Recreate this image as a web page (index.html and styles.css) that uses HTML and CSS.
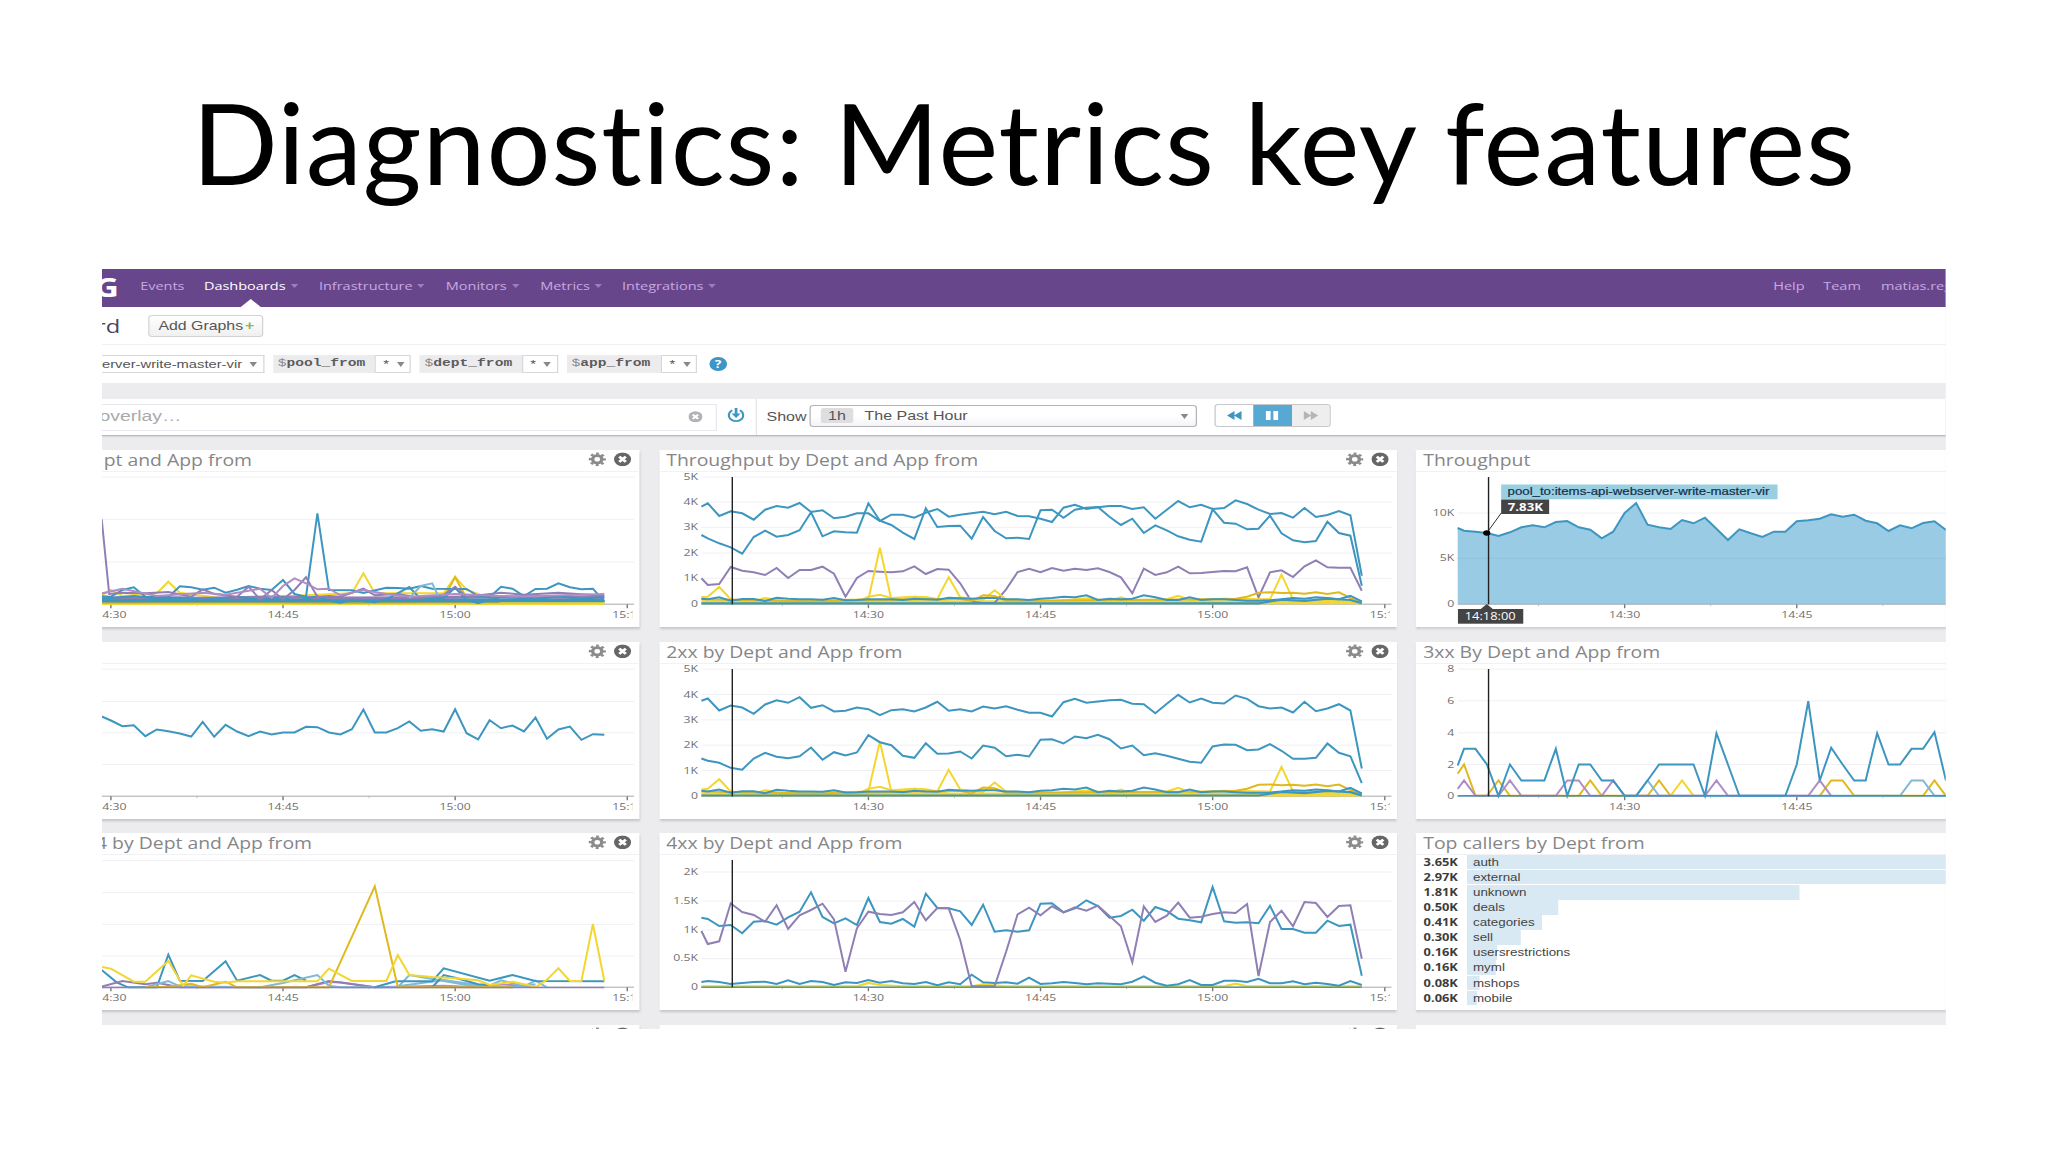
FILE: index.html
```html
<html>
  <head>
    <meta charset="utf-8">
    <title>Diagnostics: Metrics key features</title>
    <link rel="stylesheet" href="styles.css">
  </head>
  <body>
    <svg width="0" height="0" class="defs">
      <symbol id="gear" viewBox="0 0 16 16">
        <circle cx="8" cy="8" r="4.2" fill="none" stroke="#8b8b8b" stroke-width="3.2"/>
        <circle cx="8" cy="8" r="6.6" fill="none" stroke="#8b8b8b" stroke-width="2.6" stroke-dasharray="2.6 2.584" stroke-dashoffset="1.3"/>
      </symbol>
      <symbol id="close" viewBox="0 0 16 16">
        <circle cx="8" cy="8" r="7.8" fill="currentColor"/>
        <path d="M5 5l6 6M11 5l-6 6" stroke="#fff" stroke-width="2.8"/>
      </symbol>
    </svg>

    <h1 class="slide-title"><span>Diagnostics: Metrics key features</span></h1>

    <div class="frame">
      <div class="dash">
        <div class="nav">
          <div class="logo">G</div>
          <a class="events">Events</a>
          <a class="active dashboards">Dashboards<i></i></a>
          <a class="infra">Infrastructure<i></i></a>
          <a class="monitors">Monitors<i></i></a>
          <a class="metrics">Metrics<i></i></a>
          <a class="integr">Integrations<i></i></a>
          <div class="nav-right">
            <a class="help">Help</a>
            <a class="team">Team</a>
            <a class="user">matias.reg</a>
          </div>
        </div>

        <div class="head">
          <div class="name"><span>rd</span></div>
          <button class="add">Add Graphs <b>+</b></button>
        </div>

        <div class="vars">
          <div class="var-select">erver-write-master-vir<i class="caret"></i></div>
          <div class="var"><code><em>$</em>pool_from</code><span>*<i class="caret"></i></span></div>
          <div class="var"><code><em>$</em>dept_from</code><span>*<i class="caret"></i></span></div>
          <div class="var short"><code><em>$</em>app_from</code><span>*<i class="caret"></i></span></div>
          <div class="question">?</div>
        </div>

        <div class="band"></div>

        <div class="tools">
          <div class="search"><span>overlay…</span><svg class="clear"><use href="#close"/></svg></div>
          <svg class="download" viewBox="0 0 16 16">
            <path d="M4.6 2.6A6.4 6.4 0 1 0 11.4 2.6" fill="none" stroke="#3d96c6" stroke-width="2"/>
            <path d="M8 0v8" stroke="#3d96c6" stroke-width="2.4"/>
            <path d="M4 6h8l-4 5z" fill="#3d96c6"/>
          </svg>
          <div class="show">Show</div>
          <div class="range"><b>1h</b><span>The Past Hour</span><i class="caret"></i></div>
          <div class="player">
            <div><svg viewBox="0 0 16 12"><path d="M8 0v12L0 6zM15.5 0v12l-8-6z" fill="#3d96c6"/></svg></div>
            <div class="on"><svg viewBox="0 0 16 12"><path d="M1.5 0h5v12h-5zM9.5 0h5v12h-5z" fill="#fff"/></svg></div>
            <div class="off"><svg viewBox="0 0 16 12"><path d="M8 0v12l8-6zM.5 0v12l8-6z" fill="#b5b5b7"/></svg></div>
          </div>
        </div>

        <div class="board">
          <div class="panel"><h3 class="t-right t1">pt and App from</h3><svg class="chart" data-chart="errors"></svg></div>
          <div class="panel"><h3>Throughput by Dept and App from</h3><svg class="chart" data-chart="throughput"></svg></div>
          <div class="panel"><h3>Throughput</h3><svg class="chart" data-chart="pool"></svg></div>

          <div class="panel"><h3></h3><svg class="chart" data-chart="latency"></svg></div>
          <div class="panel"><h3>2xx by Dept and App from</h3><svg class="chart" data-chart="s2xx"></svg></div>
          <div class="panel"><h3>3xx By Dept and App from</h3><svg class="chart" data-chart="s3xx"></svg></div>

          <div class="panel"><h3 class="t-right t3">4 by Dept and App from</h3><svg class="chart" data-chart="s404"></svg></div>
          <div class="panel"><h3>4xx by Dept and App from</h3><svg class="chart" data-chart="s4xx"></svg></div>
          <div class="panel">
            <h3>Top callers by Dept from</h3>
            <div class="callers">
              <div><b>3.65K</b><p style="width: 536px">auth</p></div>
              <div><b>2.97K</b><p style="width: 437px">external</p></div>
              <div><b>1.81K</b><p style="width: 266px">unknown</p></div>
              <div><b>0.50K</b><p style="width: 73px">deals</p></div>
              <div><b>0.41K</b><p style="width: 59.5px">categories</p></div>
              <div><b>0.30K</b><p style="width: 43px">sell</p></div>
              <div><b>0.16K</b><p style="width: 24px">usersrestrictions</p></div>
              <div><b>0.16K</b><p style="width: 23px">myml</p></div>
              <div><b>0.08K</b><p style="width: 10px">mshops</p></div>
              <div><b>0.06K</b><p style="width: 8px">mobile</p></div>
            </div>
          </div>

          <div class="panel"><svg class="chart" data-chart="next"></svg></div>
          <div class="panel"><svg class="chart" data-chart="next"></svg></div>
          <div class="panel"></div>
        </div>
      </div>
    </div>
    <script src="charts.js"></script>
  </body>
</html>
```
FILE: styles.css
```css
body {
	margin: 0;
	width: 2048px;
	height: 1152px;
	background: #fff;
	overflow: hidden;
	font-family: "Liberation Sans", Arial, sans-serif;
}
.defs {
	position: absolute;
}
.slide-title {
	margin: 0;
	height: 269px;
	padding-top: 73px;
	box-sizing: border-box;
	text-align: center;
	font: 400 113px/136px Lato, sans-serif;
	font-variant-ligatures: none;
	letter-spacing: 0.9px;
	color: #000;
}
.slide-title span {
	display: inline-block;
	white-space: nowrap;
}
.frame {
	width: 1844px;
	height: 760px;
	margin-left: 102px;
	overflow: hidden;
}
/* the board is shown stretched sideways */
.dash {
	width: 1475.2px;
	height: 760px;
	transform: scaleX(1.25);
	transform-origin: 0 0;
	background: #ecebee;
	overflow: hidden;
}

.nav {
	display: flex;
	height: 38px;
	background: #68468c;
	font: 11.6px/34px "Open Sans", sans-serif;
	color: #c9a9e2;
	overflow: hidden;
}
.nav a {
	flex: none;
	white-space: nowrap;
	box-sizing: border-box;
}
.nav i {
	display: inline-block;
	margin-left: 4px;
	vertical-align: 2px;
	border: 3.5px solid transparent;
	border-top: 4px solid #9d7dbd;
	border-bottom: 0;
}
.logo {
	width: 30.5px;
	flex: none;
	font: bold 27px/36px "Open Sans", sans-serif;
	color: #fff;
	text-indent: -6px;
}
.events { width: 51px; }
.dashboards { width: 92px; }
.infra { width: 101.5px; }
.monitors { width: 75.5px; }
.metrics { width: 65.5px; }
.nav .active {
	position: relative;
	color: #fff;
}
.active:after {
	content: "";
	position: absolute;
	left: 29px;
	bottom: 0;
	border: 8px solid transparent;
	border-bottom: 8px solid #fff;
	border-top: 0;
}
.nav-right {
	display: flex;
	margin-left: auto;
	width: 138.2px;
}
.help { width: 40px; }
.team { width: 46.3px; }

.head {
	display: flex;
	align-items: center;
	height: 38px;
	background: #fff;
	border-bottom: 1px solid #efeff4;
	box-sizing: border-box;
}
.name {
	width: 37px;
	font: 19px/38px "Open Sans", sans-serif;
	color: #4b4668;
}
.name span {
	margin-left: -4.8px;
}
.add {
	width: 92px;
	height: 22px;
	margin: 0;
	padding: 0 0 0 1px;
	border: 1px solid #d3d3d3;
	border-radius: 3px;
	background: linear-gradient(#fff, #f0f0f0);
	font: 12.7px/18px "Liberation Sans", sans-serif;
	color: #555;
	white-space: nowrap;
}
.add b {
	color: #8cb84c;
	margin-left: -2px;
}

.vars {
	display: flex;
	align-items: center;
	height: 38px;
	background: #fff;
	font-size: 11.8px;
	color: #555;
}
.caret {
	display: inline-block;
	border: 3px solid transparent;
	border-top: 5px solid #888;
	border-bottom: 0;
}
.var-select {
	width: 129.5px;
	height: 18px;
	line-height: 16px;
	border: 1px solid #d8d8dc;
	border-left: 0;
	box-sizing: border-box;
	margin-right: 7px;
	white-space: nowrap;
}
.var-select .caret {
	margin-left: 6px;
	vertical-align: 1px;
}
.var {
	display: flex;
	width: 110.5px;
	height: 18px;
	margin-right: 7px;
}
.var.short {
	width: 104.5px;
}
.var code {
	flex: 1;
	padding-left: 4px;
	background: #ececee;
	font: bold 11.7px/17px "Liberation Mono", monospace;
	color: #5c5c5c;
}
.var em {
	font-style: normal;
	font-weight: normal;
	color: #888;
}
.var span {
	width: 29px;
	box-sizing: border-box;
	padding-left: 6px;
	border: 1px solid #d8d8dc;
	line-height: 17px;
}
.var span .caret {
	margin-left: 6px;
	vertical-align: 1px;
}
.question {
	width: 13.5px;
	height: 13.5px;
	margin-left: 3px;
	border-radius: 50%;
	background: #3d96c6;
	color: #fff;
	font: bold 11px/13.5px "Open Sans", sans-serif;
	text-align: center;
}
.band {
	height: 16px;
}

.tools {
	display: flex;
	align-items: center;
	height: 36px;
	background: #fff;
	border-bottom: 1px solid #b9b9bd;
	box-shadow: 0 1px 1px #d5d5d8;
	font-size: 12.8px;
	color: #555;
}
.search {
	display: flex;
	align-items: center;
	justify-content: space-between;
	width: 491.5px;
	height: 27px;
	box-sizing: border-box;
	border: 1px solid #e8e8ee;
	border-left: 0;
	padding-right: 10px;
	font-size: 15.5px;
	line-height: 24px;
	color: #aaa;
}
.search span {
	margin: -3px 0 0 -2px;
}
.clear {
	width: 11.5px;
	height: 11.5px;
	color: #b2b2b4;
}
.download {
	width: 14.5px;
	height: 14.5px;
	margin: 0 9px 4px 8px;
}
.show {
	width: 43px;
	height: 36px;
	box-sizing: border-box;
	border-left: 1px solid #e4e4e8;
	padding-left: 7.6px;
	line-height: 35px;
	white-space: nowrap;
}
.range {
	display: flex;
	align-items: center;
	width: 310px;
	height: 22px;
	margin-top: -2px;
	box-sizing: border-box;
	padding-left: 8px;
	border: 1px solid #b4b4b8;
	border-radius: 3px;
	background: linear-gradient(#fff 50%, #f3f3f5);
}
.range b {
	width: 26px;
	height: 15px;
	margin: -1px 9px 0 0;
	border-radius: 2px;
	background: #dedee1;
	font-weight: normal;
	line-height: 15px;
	text-align: center;
}
.range span {
	margin-top: -1px;
}
.range .caret {
	margin-left: auto;
	margin-right: 6px;
}
.player {
	display: flex;
	width: 93px;
	height: 23px;
	margin: -3px 0 0 14px;
	box-sizing: border-box;
	border: 1px solid #c8c8cc;
	border-radius: 3px;
	overflow: hidden;
}
.player div {
	flex: 1;
	display: flex;
	align-items: center;
	justify-content: center;
}
.player svg {
	width: 12px;
	height: 11px;
}
.player .on {
	background: #57a9d4;
}
.player .off {
	background: #eeeeef;
}

.board {
	display: grid;
	grid-template-columns: repeat(3, 590px);
	grid-auto-rows: 177px;
	gap: 14.5px 15.6px;
	margin: 14px 0 0 -160px;
}
.panel {
	background: #fff;
	box-shadow: 0 2px 2px #c4c4c8;
	position: relative;
}
.panel h3 {
	margin: 0;
	height: 21px;
	box-sizing: border-box;
	height: 22px;
	padding-left: 5.8px;
	border-bottom: 1px solid #f1f1f6;
	font: 15.5px/20px "Open Sans", sans-serif;
	color: #868688;
	white-space: nowrap;
}
.panel .t-right {
	padding-left: 0;
	text-align: right;
}
.panel .t1 { padding-right: 310px; }
.panel .t3 { padding-right: 262px; }
.chart {
	position: absolute;
	left: 0;
	top: 0;
	width: 590px;
	height: 177px;
}
.chart text {
	font: 9.8px "Open Sans", sans-serif;
	fill: #707070;
}
.chart .tip {
	font: 10.6px "Liberation Sans", sans-serif;
	fill: #14304a;
	stroke: #14304a;
	stroke-width: .2px;
}
.chart .tip-value {
	font-size: 10.6px;
	font-weight: bold;
	fill: #fff;
}
.chart .tip-time {
	font-size: 10.3px;
	fill: #fff;
}
.callers {
	padding-left: 6.1px;
}
.callers div {
	display: flex;
	height: 15.07px;
}
.callers b {
	width: 34.9px;
	flex: none;
	font: bold 10.3px/15px "Open Sans", sans-serif;
	color: #3c3c3c;
}
.callers p {
	margin: 0;
	height: 14.4px;
	box-sizing: border-box;
	padding-left: 4.6px;
	background: #d8e9f3;
	font: 10.7px/15px "Liberation Sans", sans-serif;
	color: #444;
	white-space: nowrap;
}
```
FILE: charts.js
```js
const BLUE = "#3d96bf", SKY = "#7fb9d6", PURPLE = "#8f7fb5", LILAC = "#b08cc4", YELLOW = "#f3d62f", GOLD = "#dfb91d", OLIVE = "#b5a642";

// Series hold one level per minute from 14:16, or "minute:level" pairs.
// Levels run downwards, three to a pixel, dy puts them on the panel.
const charts = {
  errors: {
    dy: 10, grid: [111, 238, 366],
    series: [
      [YELLOW, "29:489 73:489", 4],
      [OLIVE, "29:486 40:485 50:487 60:485 73:486", 3],
      [YELLOW, "29:470 30:450 31:468 34:460 35:425 36:458 40:476 51:460 52:400 53:460 59:460 60:410 61:450 64:486 73:489"],
      [BLUE, "29:481 73:481", 4],
      [PURPLE, "29:474 33:472 38:475 44:471 50:474 57:473 63:470 73:472", 3],
      [GOLD, "59.2:462 60:412 60.8:462"],
      [BLUE, "29:468 30:470 31:450 32:442 33:470 35:472 36:439 37:442 38:449 39:443 40:458 41:449 42:438 43:446 44:450 45:420 46:462 47:470 48:220 49:450 51:451 52:459 54:443 55:444 56:446 57:438 58:446 61:447 62:468 63:472 64:440 65:446 66:468 67:447 68:446 69:430 70:442 71:448 72:446 73:484"],
      [BLUE, "29:478 32:468 34:476 36:473 38:479 41:470 43:479 45:472 46:484 48:469 49:482 50:488 51:480 53:487 54:478 56:441 57:478 59:474 60:443 61:480 62:490 64:470 67:478 69:469 71:477 73:470"],
      [PURPLE, "29.2:238 29.85:462 31:458 33:460 35:456 37:470 38:448 39:462 41:470 42:440 43:478 44:450 45:478 46:450 47:412 48:470 49:468 50:470 52:446 53:466 55:462 57:474 59:464 60:440 61:470 64:458 66:464 69:458 73:467"],
      [LILAC, "29:462 31:446 34:468 38:458 40:464 43:446 44:474 45:438 46:415 47:430 48:448 49:446 50:466 52:450 54:462 56:470 60:462 65:470 73:462"],
      [SKY, "56:474 57:438 58:430 58.5:466"]
    ]
  },
  throughput: {
    dy: 10, grid: [111, 186, 262, 339, 415], labels: ["5K:111", "4K:186", "3K:262", "2K:339", "1K:415", "0:491"], cursor: true,
    series: [
      [YELLOW, "15.45:487 73:487", 4],
      [PURPLE, "15.45:415 435 432 381 392 397 405 384 414 390 390 380 401 470 414 393 395 397 394 379 402 387 389 430 485 489 489 448 396 386 397 384 392 386 390 385 396 412 460 386 405 397 380 400 399 396 393 394 382 472 397 391 411 379 361 382 383 383 452"],
      [YELLOW, "15.45:472 16:470 17:441 18:478 20:484 21:474 23:484 30:478 31:323 32:478 34:470 36:478 37:411 38:472 40:480 41:451 42:478 46:484 49:475 51:482 52:472 53:484 56:478 57:467 58:480 61:476 65:478 66:404 67:478 73:487"],
      [YELLOW, "29:486 30:470 31:464 32:474 34:470 35:471 37:484"],
      [GOLD, "15.45:478 25:484 38:476 39:484 40:466 41:468 42:482 60:478 62:476 63:470 64:458 65:457 66:459 67:458 68:461 69:457 70:462 71:457 72:474 73:487"],
      [BLUE, "15.45:476 478 472 482 477 477 483 473 476 478 478 479 474 481 480 478 478 478 480 476 478 479 473 475 476 474 474 478 478 480 476 474 470 472 466 480 476 478 476 466 472 480 480 472 480 478 478 480 482 482 481 478 474 476 472 474 478 467 484"],
      [BLUE, "15.45:490 64:490 66:479 68:483 70:476 72:480 73:490", 2.2]
    ],
    lines: [
      "15.45:200 190 228 214 220 239 209 198 203 189 216 211 235 230 220 220 243 224 224 233 218 207 230 224 220 215 223 215 228 229 236 246 203 194 207 202 198 198 207 202 236 209 183 202 194 207 204 181 192 209 222 219 233 204 231 225 213 226 407",
      "15.45:285 295 310 322 341 291 272 290 285 271 217 289 274 277 278 190 242 255 278 297 205 261 258 257 296 231 273 295 293 297 211 209 233 209 203 201 230 255 236 279 256 271 289 299 305 208 248 251 268 266 227 280 301 307 303 245 279 287 437"
    ]
  },
  pool: {
    dy: 10, grid: [219, 355], labels: ["10K:219", "5K:355", "0:491"], cursor: true, tooltip: true,
    area: "15.45:264 272 275 279 288 277 262 256 262 246 243 262 269 295 275 219 189 254 262 267 240 250 233 266 300 268 280 291 275 275 244 241 236 223 230 224 242 250 273 256 265 249 244 270",
    series: []
  },
  latency: {
    dy: 11.5, grid: [116, 213, 307, 402], series: [],
    lines: ["29.2:258 30:270 31:287 32:284 33:317 34:297 35:302 36:309 37:318 38:274 39:319 40:283 41:303 42:317 43:303 44:312 45:306 46:306 47:289 48:290 49:306 50:312 51:296 52:237 53:306 54:306 55:293 56:273 57:301 58:296 59:303 60:236 61:308 62:327 63:269 64:293 65:285 66:303 67:261 68:325 69:297 70:288 71:328 72:311 73:313"]
  },
  s2xx: {
    dy: 11.5, grid: [116, 192, 268, 344, 420], labels: ["5K:116", "4K:192", "3K:268", "2K:344", "1K:420", "0:496"], cursor: true,
    series: [
      [YELLOW, "15.45:492 73:492", 4],
      [YELLOW, "15.45:477 16:475 17:446 18:483 20:489 21:479 23:489 30:483 31:333 32:483 34:475 36:483 37:418 38:477 40:485 41:456 42:483 46:489 49:480 51:487 52:477 53:489 56:483 57:472 58:485 61:481 65:483 66:409 67:483 73:492"],
      [YELLOW, "29:491 30:475 31:469 32:479 34:475 35:476 37:489"],
      [GOLD, "15.45:483 25:489 38:481 39:489 40:471 41:473 42:487 60:483 62:481 63:475 64:463 65:462 66:464 67:463 68:466 69:462 70:467 71:462 72:479 73:492"],
      [BLUE, "15.45:481 483 477 487 482 482 488 478 481 483 483 484 479 486 485 483 483 483 485 481 483 484 478 480 481 479 479 483 483 485 481 479 475 477 471 485 481 483 481 471 477 485 485 477 485 483 483 485 487 487 486 483 479 481 477 479 483 472 489"],
      [BLUE, "15.45:495 64:495 66:484 68:488 70:481 72:485 73:495", 2.2]
    ],
    lines: [
      "15.45:211 204 240 225 231 250 222 209 217 200 232 224 243 241 231 236 254 239 236 243 231 214 241 236 243 228 234 227 238 247 247 258 215 205 217 213 209 208 220 221 248 220 193 216 204 217 219 195 205 227 234 231 246 214 242 234 221 240 414",
      "15.45:384 391 397 412 418 384 367 379 383 377 351 388 365 375 366 314 335 344 376 382 338 370 369 363 384 345 352 377 373 378 328 326 339 318 323 313 326 354 345 374 368 376 385 394 397 348 342 343 359 357 341 361 385 385 382 339 367 377 458"
    ]
  },
  s3xx: {
    dy: 11.5, grid: [116, 211, 307, 402], labels: ["8:116", "6:211", "4:307", "2:402", "0:496"], cursor: true,
    series: [
      [GOLD, "15.45:430 16:402 17:496 18:496 19:450 20:496 26:496 27:450 28:496 32:496 33:450 34:496"],
      [YELLOW, "34:496 35:450 36:496"],
      [GOLD, "47:496 48:450 49:450 50:496 56:496 57:450 58:496"],
      [SKY, "31:496 32:450 33:496 54:496 55:450 56:450 57:496 60:496"],
      [LILAC, "15.45:475 16:450 17:496 19:496 20:450 21:496 24:496 25:450 26:450 27:496 28:496 29:450 30:496 37:496 38:450 39:496 46:496 47:450 48:496"],
      [BLUE, "15.45:496 73:496", 1.4]
    ],
    lines: ["15.45:405 355 355 402 496 402 450 450 450 355 496 402 402 450 450 496 496 450 402 402 402 402 496 308 402 496 496 496 496 496 402 212 450 352 402 450 450 308 402 402 355 355 305 450"]
  },
  s404: {
    dy: 8, grid: [107, 203, 298, 393],
    series: [
      [BLUE, "29.2:435 30.5:472 31.5:487 34:487 35:389 36:467 38:468 40:409 41:467 43:450 44:467 45:467 46:450 47:467"],
      [LILAC, "47:487 49:471 50:472 53:487 59:482 61:485 64:478 67:485"],
      [PURPLE, "29:487 31:468 33:478 34:473 36:487 47:487 49:468 53:487"],
      [SKY, "33:487 35:468 36:484 43:487 45:474 46:466 48:450 49:482 50:487 55:487 56:450 58:462 61:480 63:482 64:466 66:484 67:467 68:487"],
      [SKY, "55:484 59:465 62:480 65:487 67:478"],
      [BLUE, "53:487 54.8:469 58:469 59:430 63:467 65:450 67:468 73:469"],
      [BLUE, "58:487 59:450 60:458 62:478 63:480"],
      [GOLD, "33:487 35:485 37:476 38:487 40:470 41:487 49:487 53:184 55:487 65:487"],
      [YELLOW, "29.2:426 30:431 32:470 33:470 35:408 36.3:482 37:451 39:470 40:473 41:469 48:469 49:431 51:468 54:468 55:390 56:450 58:456 60:460 62:466 63:480 65:470 67:485"],
      [YELLOW, "67:487 68:464 69:430 70:468 71:468 72:297 73:467"],
      [PURPLE, "29:487.5 73:487.5", 1.4]
    ]
  },
  s4xx: {
    dy: 8, grid: [141, 228, 315, 401], labels: ["2K:141", "1.5K:228", "1K:315", "0.5K:400", "0:487"], cursor: true,
    series: [
      [YELLOW, "15.45:484 29:484 30:474 31:480 33:484 39:484 40:478 42:484 61:484 62:476 63:484 73:484", 2.2],
      [BLUE, "15.45:471 468 471 477 474 471 470 477 466 477 468 471 480 472 474 465 473 468 475 477 471 481 472 478 449 472 474 472 476 458 477 475 471 474 478 475 476 478 470 454 473 482 478 465 480 480 467 467 471 461 475 475 469 478 473 477 482 468 480"]
    ],
    lines: ["15.45:278 282 303 300 325 290 288 299 277 260 202 276 295 280 300 219 291 296 282 305 206 249 250 259 300 239 320 316 320 316 236 235 262 250 226 243 278 273 254 287 246 258 281 286 292 186 289 293 292 295 242 312 312 323 323 287 303 299 452"],
    over: [[PURPLE, "15.45:318 357 349 235 261 270 290 241 312 271 255 236 283 440 310 260 267 270 262 231 286 249 250 345 484 484 484 380 268 248 271 244 262 247 257 242 273 304 412 244 291 272 233 278 275 267 262 264 237 453 291 257 304 231 234 276 243 241 401"],
      ["#4f9a9a", "15.45:487 73:487", 1.4]]
  },
  next: { empty: true }
};

const BASE = 154.2;
const xAt = minute => 208.9 + (minute - 30) * 11.475;

function points(data, dy) {
  let next = 16;
  return data.split(" ").map(item => {
    const parts = item.split(":");
    const minute = parts.length > 1 ? +parts[0] : next++;
    const level = +parts[parts.length - 1];
    return xAt(minute).toFixed(1) + "," + (level / 3 - dy).toFixed(1);
  }).join(" ");
}

function line(color, data, dy, width = 2) {
  return `<polyline points="${points(data, dy)}" fill="none" stroke="${color}" stroke-width="${width}"/>`;
}

function text(x, y, value, anchor = "middle", cls = "") {
  return `<text class="${cls}" transform="translate(${x} ${y}) scale(1.25 1)" text-anchor="${anchor}">${value}</text>`;
}

function plot(c) {
  let out = "";

  c.grid.forEach(g => {
    out += `<path d="M42 ${g / 3 - c.dy}H732" stroke="#f0f0f4"/>`;
  });
  if (c.area) {
    out += `<polygon points="42,${BASE} ${points(c.area, c.dy)} ${xAt(59)},${BASE}" fill="#9acbe4"/>`;
    out += `<path d="M42 ${355 / 3 - c.dy}H560" stroke="#8fc2dc"/>`;
    out += line(BLUE, c.area, c.dy);
  }

  out += `<path d="M42 ${BASE}H732" stroke="#a9a9b0"/>`;
  [30, 45, 60, 75].forEach(m => {
    out += `<path d="M${xAt(m)} ${BASE}v4" stroke="#777" stroke-width="1.4"/>`;
  });
  [22.5, 37.5, 52.5].forEach(m => {
    out += `<path d="M${xAt(m)} ${BASE}v2" stroke="#bbb"/>`;
  });
  out += text(xAt(30), 168, "14:30") + text(xAt(45), 168, "14:45") + text(xAt(60), 168, "15:00");
  out += `<svg x="700" y="155" width="30.5" height="20">${text(10.2, 13, "15:1", "start")}</svg>`;

  c.series.forEach(s => { out += line(s[0], s[1], c.dy, s[2]); });
  (c.lines || []).forEach(s => { out += line(BLUE, s, c.dy); });
  (c.over || []).forEach(s => { out += line(s[0], s[1], c.dy, s[2]); });

  (c.labels || []).forEach(l => {
    const [name, level] = l.split(":");
    out += text(38.5, level / 3 - c.dy + 3, name, "end");
  });
  if (c.cursor) {
    out += `<path d="M72.8 27V${BASE}" stroke="#222" stroke-width="1.4"/>`;
  }
  return out;
}

function tooltip() {
  return `<path d="M71 83L85.5 63" stroke="#333"/>
    <ellipse cx="71" cy="83" rx="3.6" ry="2.8"/>
    <rect x="85.4" y="34.5" width="276.4" height="14.8" fill="#9acfe2"/>
    <rect x="85.4" y="49.5" width="48" height="14.5" fill="#444"/>
    <path d="M65 159l6-5 6 5z" fill="#444"/>
    <rect x="42.2" y="159" width="65.3" height="14.7" fill="#444"/>`
    + text(91.8, 45.2, "pool_to:items-api-webserver-write-master-vir", "start", "tip")
    + text(92, 60.6, "7.83K", "start", "tip-value")
    + text(49, 169.8, "14:18:00", "start", "tip-time");
}

document.querySelectorAll(".chart").forEach(el => {
  const c = charts[el.dataset.chart];
  let out = c.empty ? "" : plot(c);

  if (c.tooltip) {
    out += tooltip();
  } else {
    out += `<use href="#gear" width="14" height="14" transform="translate(686.5 2.3) scale(1.25 1)"/>
      <use href="#close" color="#666" width="14" height="14" transform="translate(711.8 2.3) scale(1.25 1)"/>`;
  }

  el.setAttribute("viewBox", "0 0 737.5 177");
  el.setAttribute("preserveAspectRatio", "none");
  el.innerHTML = out;
});
```
